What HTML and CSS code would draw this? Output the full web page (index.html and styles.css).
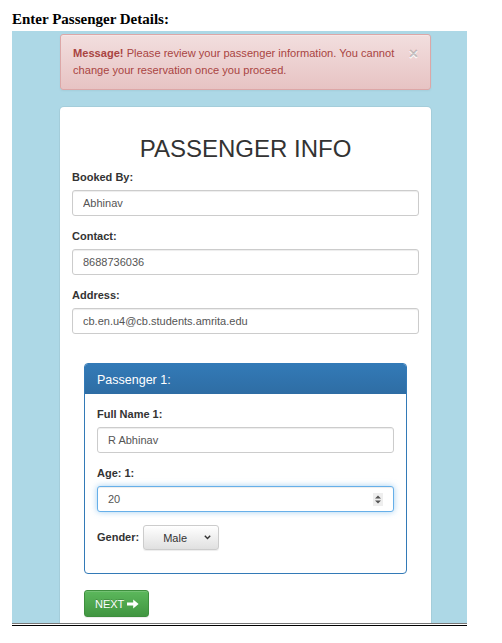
FILE: index.html
```html
<!DOCTYPE html>
<html>
<head>
<meta charset="utf-8">
<title>Passenger Details</title>
<link rel="stylesheet" href="styles.css">
</head>
<body>
<h3 class="page-title">Enter Passenger Details:</h3>
<div class="stage">
  <div class="alert">
    <p class="alert-text"><strong>Message!</strong> Please review your passenger information. You cannot change your reservation once you proceed.</p>
    <span class="close">&times;</span>
  </div>
  <div class="card">
    <h1 class="card-title">PASSENGER INFO</h1>
    <div class="group">
      <label class="label">Booked By:</label>
      <input class="field" type="text" value="Abhinav">
    </div>
    <div class="group">
      <label class="label">Contact:</label>
      <input class="field" type="text" value="8688736036">
    </div>
    <div class="group">
      <label class="label">Address:</label>
      <input class="field" type="text" value="cb.en.u4@cb.students.amrita.edu">
    </div>
    <div class="panel-wrap">
      <div class="panel">
        <div class="panel-head">Passenger 1:</div>
        <div class="panel-body">
          <div class="group">
            <label class="label">Full Name 1:</label>
            <input class="field" type="text" value="R Abhinav">
          </div>
          <div class="group">
            <label class="label">Age: 1:</label>
            <div class="field field-focus number">
              <span>20</span>
              <span class="spinner">
                <svg width="6" height="9" viewBox="0 0 6 9"><path d="M0 3.5L3 0.5 6 3.5Z M0 5.5L3 8.5 6 5.5Z" fill="#555"/></svg>
              </span>
            </div>
          </div>
          <div class="gender-row">
            <label class="label inline">Gender:</label>
            <div class="select">
              <span>Male</span>
              <svg width="7" height="5" viewBox="0 0 7 5"><path d="M0.8 0.8L3.5 3.6 6.2 0.8" fill="none" stroke="#333" stroke-width="1.4"/></svg>
            </div>
          </div>
        </div>
      </div>
    </div>
    <button class="btn-next" type="button">NEXT
      <svg width="12" height="10" viewBox="0 0 12 10"><path d="M0 3.4H6.2V0.4L11.6 5 6.2 9.6V6.6H0Z" fill="#fff"/></svg>
    </button>
  </div>
</div>
<div class="rule"></div>
</body>
</html>
```
FILE: styles.css
```css
body {
  margin: 0;
  background: #fff;
  font-family: "Liberation Sans", Arial, sans-serif;
  color: #333;
}

.page-title {
  margin: 0 0 2px;
  padding: 10px 0 0 12px;
  font: bold 15px/19px "Liberation Serif", "Times New Roman", serif;
  color: #000;
}

.stage {
  margin-left: 12px;
  width: 455px;
  height: 592px;
  box-sizing: border-box;
  padding: 3px 36px 0 48px;
  background: #add8e6;
  overflow: hidden;
}

.alert {
  display: flex;
  align-items: flex-start;
  gap: 8px;
  height: 56px;
  box-sizing: border-box;
  padding: 10px 12px 10px 12px;
  margin-bottom: 17px;
  border: 1px solid #dca7a7;
  border-radius: 3px;
  background: linear-gradient(#f2dede, #e7c3c3);
  box-shadow: inset 0 1px 0 rgba(255,255,255,.25), 0 1px 2px rgba(0,0,0,.05);
  color: #a94442;
  font-size: 11.1px;
  line-height: 17px;
}

.alert-text {
  flex: 1;
  margin: 0;
}

.close {
  font-weight: bold;
  font-size: 16px;
  line-height: 17px;
  color: rgba(0,0,0,.22);
  text-shadow: 0 1px 0 #fff;
}

.card {
  background: #fff;
  border-radius: 4px;
  box-shadow: 0 0 0 1px rgba(0,0,0,.05);
  padding: 28px 12px 40px;
}

.card-title {
  margin: 0 0 8px;
  text-align: center;
  font-weight: normal;
  font-size: 24px;
  line-height: 27px;
  color: #333;
}

.group {
  margin-bottom: 13px;
}

.label {
  display: block;
  margin-bottom: 5px;
  font-weight: bold;
  font-size: 11px;
  line-height: 15px;
  color: #333;
}

.label.inline {
  display: inline-block;
  margin: 0 0 1px;
}

.field {
  display: block;
  width: 100%;
  height: 26px;
  box-sizing: border-box;
  margin: 0;
  padding: 0 10px;
  border: 1px solid #ccc;
  border-radius: 3px;
  box-shadow: inset 0 1px 1px rgba(0,0,0,.075);
  background: #fff;
  font: 11px "Liberation Sans", Arial, sans-serif;
  color: #555;
  outline: none;
}

.field-focus {
  border-color: #66afe9;
  box-shadow: inset 0 1px 1px rgba(0,0,0,.075), 0 0 6px rgba(102,175,233,.6);
}

.number {
  display: flex;
  align-items: center;
  justify-content: space-between;
}

.spinner {
  display: flex;
  align-items: center;
  justify-content: center;
  width: 10px;
  height: 13px;
  background: #eee;
}

.panel-wrap {
  padding: 16px 12px 0;
  margin-bottom: 16px;
}

.panel {
  border: 1px solid #337ab7;
  border-radius: 4px;
  overflow: hidden;
  background: #fff;
}

.panel-head {
  padding: 9px 12px 7px;
  line-height: 14px;
  font-size: 12.5px;
  color: #fff;
  background: linear-gradient(#337ab7, #2e6da4);
}

.panel-body {
  padding: 13px 12px 10px;
}

.gender-row {
  display: flex;
  align-items: center;
  gap: 4px;
  margin-bottom: 13px;
}

.select {
  display: flex;
  align-items: center;
  justify-content: space-between;
  width: 76px;
  height: 25px;
  box-sizing: border-box;
  padding: 0 7px 0 19px;
  border: 1px solid #ccc;
  border-radius: 3px;
  background: linear-gradient(#fff, #e0e0e0);
  box-shadow: inset 0 1px 0 rgba(255,255,255,.15), 0 1px 1px rgba(0,0,0,.075);
  font-size: 11px;
  color: #333;
}

.btn-next {
  display: inline-flex;
  align-items: center;
  gap: 3px;
  height: 27px;
  margin-left: 12px;
  padding: 0 9px 0 10px;
  border: 1px solid #3e8f3e;
  border-radius: 3px;
  background: linear-gradient(#5cb85c, #419641);
  box-shadow: inset 0 1px 0 rgba(255,255,255,.15), 0 1px 1px rgba(0,0,0,.075);
  font: 11px "Liberation Sans", Arial, sans-serif;
  color: #fff;
  text-shadow: 0 -1px 0 rgba(0,0,0,.2);
}

.rule {
  margin-left: 12px;
  width: 455px;
  height: 1px;
  border-top: 1px solid #777;
  border-bottom: 1px solid #000;
}
```
